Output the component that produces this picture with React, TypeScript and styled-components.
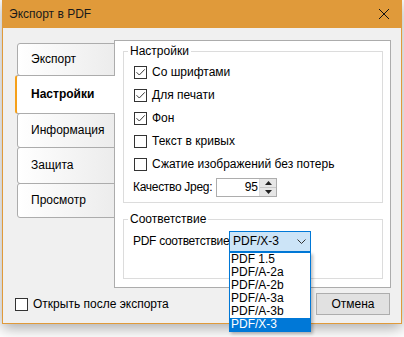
import styled, { createGlobalStyle } from "styled-components";

const GlobalStyle = createGlobalStyle`
  html, body {
    margin: 0;
    padding: 0;
    background: #ffffff;
  }
  body {
    font-family: "Liberation Sans", Arial, sans-serif;
    font-size: 12px;
    line-height: 15px;
    color: #000000;
  }
`;

const Page = styled.div`
  height: 337px;
`;

const Window = styled.div`
  margin-left: 2px;
  width: 400px;
  box-sizing: border-box;
  border: 1px solid #e09a3a;
  border-top: none;
  background: #f0f0f0;
  box-shadow: 0 4px 14px rgba(0, 0, 0, 0.35);
`;

const TitleBar = styled.div`
  height: 28px;
  margin: 0 -1px;
  padding: 0 0 0 7px;
  background: #e09a3a;
  display: flex;
  align-items: center;
  justify-content: space-between;
  color: #1a1a1a;
`;

const CloseButton = styled.button`
  width: 30px;
  height: 28px;
  border: none;
  background: transparent;
  display: flex;
  align-items: center;
  justify-content: center;
  padding: 0;
  margin-right: 3px;
`;

const Content = styled.div`
  padding: 12px 10px 8px 12px;
`;

const MainRow = styled.div`
  display: flex;
  align-items: flex-start;
`;

const TabList = styled.div`
  width: 100px;
  margin-right: -1px;
  padding-top: 3px;
  display: flex;
  flex-direction: column;
  position: relative;
  z-index: 1;
`;

const Tab = styled.div<{ $active?: boolean; $height: number }>`
  box-sizing: border-box;
  height: ${(p) => p.$height}px;
  margin-top: -1px;
  margin-left: ${(p) => (p.$active ? 0 : 2)}px;
  padding-left: ${(p) => (p.$active ? 14 : 13)}px;
  display: flex;
  align-items: center;
  border: 1px solid #acacac;
  border-left: ${(p) => (p.$active ? "2px solid #f5a01a" : "1px solid #acacac")};
  border-right: ${(p) => (p.$active ? "none" : "1px solid #acacac")};
  border-radius: 3px 0 0 3px;
  background: ${(p) =>
    p.$active ? "#ffffff" : "linear-gradient(to right, #ffffff, #ececec)"};
  font-weight: ${(p) => (p.$active ? 700 : 400)};

  &:first-child {
    margin-top: 0;
  }
`;

const Panel = styled.div`
  width: 277px;
  box-sizing: border-box;
  border: 1px solid #acacac;
  background: #ffffff;
  padding: 2px 7px 8px 8px;
  display: flex;
  flex-direction: column;
  gap: 8px;
`;

const Group = styled.fieldset`
  margin: 0;
  padding: 2px 0 3px 0;
  border: 1px solid #dcdcdc;
  min-width: 0;

  & > legend {
    margin-left: 4px;
    padding: 0 2px;
    line-height: 16px;
  }
`;

const Row = styled.div<{ $height?: number; $after?: number }>`
  height: ${(p) => p.$height ?? 23}px;
  margin-bottom: ${(p) => p.$after ?? 0}px;
  padding-left: 10px;
  display: flex;
  align-items: center;
  gap: 5px;
`;

const FieldLabel = styled.span<{ $width: number }>`
  width: ${(p) => p.$width}px;
  margin-left: -1px;
  flex: none;
  white-space: nowrap;
  letter-spacing: -0.3px;
`;

const Box = styled.span`
  width: 13px;
  height: 13px;
  box-sizing: border-box;
  border: 1px solid #333333;
  background: #ffffff;
  flex: none;
  display: flex;
`;

const SpinBox = styled.div`
  width: 61px;
  height: 19px;
  box-sizing: border-box;
  border: 1px solid #adadad;
  background: #ffffff;
  display: flex;
  margin-left: -5px;
`;

const SpinValue = styled.span`
  flex: 1;
  text-align: right;
  padding-right: 1px;
  line-height: 17px;
`;

const SpinButtons = styled.div`
  width: 16px;
  display: flex;
  flex-direction: column;
  border-left: 1px solid #dadada;
`;

const SpinButton = styled.span`
  flex: 1;
  background: #e6e6e6;
  display: flex;
  align-items: center;
  justify-content: center;

  & + & {
    border-top: 1px solid #c8c8c8;
  }
`;

const SelectWrap = styled.div`
  position: relative;
  margin-left: -5px;
`;

const Select = styled.div`
  width: 82px;
  height: 21px;
  box-sizing: border-box;
  border: 1px solid #0078d7;
  background: #cce4f7;
  padding: 0 4px 0 3px;
  display: flex;
  align-items: center;
  justify-content: space-between;
`;

const DropList = styled.ul`
  position: absolute;
  top: 21px;
  left: 0;
  width: 82px;
  box-sizing: border-box;
  margin: 0;
  padding: 0;
  list-style: none;
  border: 1px solid #0078d7;
  background: #ffffff;
  box-shadow: 2px 2px 3px rgba(0, 0, 0, 0.25);
  z-index: 5;
`;

const DropItem = styled.li<{ $selected?: boolean }>`
  height: 13px;
  line-height: 13px;
  padding-left: 1px;
  background: ${(p) => (p.$selected ? "#0078d7" : "transparent")};
  color: ${(p) => (p.$selected ? "#ffffff" : "#000000")};
`;

const BottomRow = styled.div`
  margin-top: 5px;
  height: 22px;
  display: flex;
  align-items: center;
  justify-content: space-between;
`;

const BottomCheck = styled.label`
  display: flex;
  align-items: center;
  gap: 5px;
`;

const Button = styled.button`
  width: 74px;
  height: 22px;
  margin-right: 1px;
  border: 1px solid #adadad;
  background: #e1e1e1;
  font: inherit;
  color: #000000;
  padding: 0;
`;

function Check({ checked }: { checked?: boolean }) {
  return (
    <Box>
      {checked && (
        <svg width="11" height="11" viewBox="0 0 11 11">
          <path d="M1.5 5.2 L4.3 8 L9.8 2.3" fill="none" stroke="#3a3a3a" strokeWidth="1" />
        </svg>
      )}
    </Box>
  );
}

const tabs = [
  { label: "Экспорт", h: 33 },
  { label: "Настройки", h: 39, active: true },
  { label: "Информация", h: 35 },
  { label: "Защита", h: 37 },
  { label: "Просмотр", h: 35 },
];

const options = [
  { label: "Со шрифтами", checked: true },
  { label: "Для печати", checked: true },
  { label: "Фон", checked: true },
  { label: "Текст в кривых" },
  { label: "Сжатие изображений без потерь" },
];

const formats = ["PDF 1.5", "PDF/A-2a", "PDF/A-2b", "PDF/A-3a", "PDF/A-3b", "PDF/X-3"];

export default function App() {
  return (
    <Page>
      <GlobalStyle />
      <Window>
        <TitleBar>
          <span>Экспорт в PDF</span>
          <CloseButton>
            <svg width="10" height="10" viewBox="0 0 10 10">
              <path d="M0 0 L10 10 M10 0 L0 10" stroke="#111" strokeWidth="1" />
            </svg>
          </CloseButton>
        </TitleBar>

        <Content>
          <MainRow>
            <TabList>
              {tabs.map((t) => (
                <Tab key={t.label} $active={t.active} $height={t.h}>
                  {t.label}
                </Tab>
              ))}
            </TabList>

            <Panel>
              <Group>
                <legend>Настройки</legend>
                {options.map((o) => (
                  <Row key={o.label}>
                    <Check checked={o.checked} />
                    <span>{o.label}</span>
                  </Row>
                ))}
                <Row>
                  <FieldLabel $width={83}>Качество Jpeg:</FieldLabel>
                  <SpinBox>
                    <SpinValue>95</SpinValue>
                    <SpinButtons>
                      <SpinButton>
                        <svg width="7" height="4" viewBox="0 0 7 4">
                          <path d="M0 4 L3.5 0 L7 4 Z" fill="#222" />
                        </svg>
                      </SpinButton>
                      <SpinButton>
                        <svg width="7" height="4" viewBox="0 0 7 4">
                          <path d="M0 0 L3.5 4 L7 0 Z" fill="#222" />
                        </svg>
                      </SpinButton>
                    </SpinButtons>
                  </SpinBox>
                </Row>
              </Group>

              <Group>
                <legend>Соответствие</legend>
                <Row $height={25} $after={21}>
                  <FieldLabel $width={96}>PDF соответствие</FieldLabel>
                  <SelectWrap>
                    <Select>
                      <span>PDF/X-3</span>
                      <svg width="9" height="5" viewBox="0 0 9 5">
                        <path d="M0.5 0.5 L4.5 4.5 L8.5 0.5" fill="none" stroke="#333" strokeWidth="1" />
                      </svg>
                    </Select>
                    <DropList>
                      {formats.map((f) => (
                        <DropItem key={f} $selected={f === "PDF/X-3"}>
                          {f}
                        </DropItem>
                      ))}
                    </DropList>
                  </SelectWrap>
                </Row>
              </Group>
            </Panel>
          </MainRow>

          <BottomRow>
            <BottomCheck>
              <Check />
              <span>Открыть после экспорта</span>
            </BottomCheck>
            <Button>Отмена</Button>
          </BottomRow>
        </Content>
      </Window>
    </Page>
  );
}
